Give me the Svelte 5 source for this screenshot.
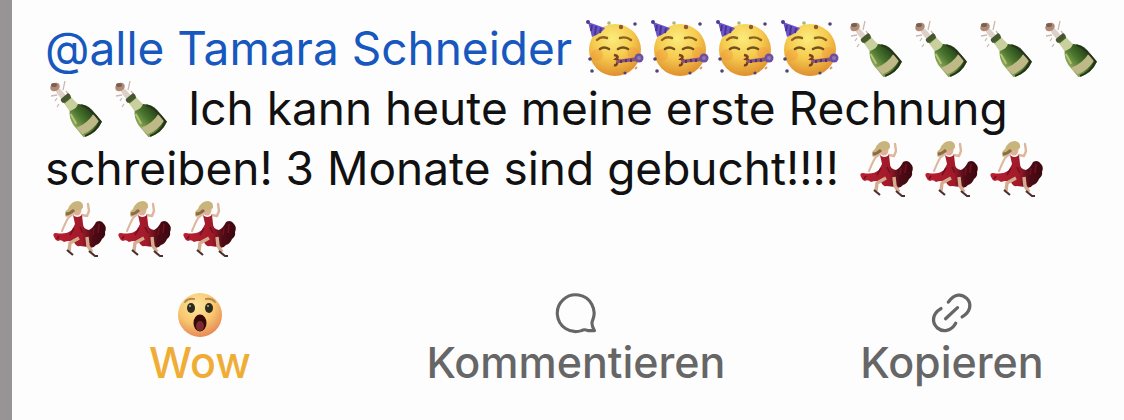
<script>
    let mention = "@alle Tamara Schneider";
    let bottles = 6;
    let faces = 4;
    let dancers = 6;
    let reacted = $state(true);
</script>

<svg class="defs" aria-hidden="true">
    <defs>
        <radialGradient id="face" cx="45%" cy="28%" r="75%">
            <stop offset="0" stop-color="#fbec7c" />
            <stop offset="0.5" stop-color="#f6cb4f" />
            <stop offset="1" stop-color="#dd8a2b" />
        </radialGradient>
        <radialGradient id="surprise" cx="42%" cy="28%" r="75%">
            <stop offset="0" stop-color="#fde6a0" />
            <stop offset="0.55" stop-color="#f8c76e" />
            <stop offset="1" stop-color="#e58455" />
        </radialGradient>
        <linearGradient id="skirt" x1="0" x2="1">
            <stop offset="0" stop-color="#bb1f30" />
            <stop offset="0.55" stop-color="#a01a2a" />
            <stop offset="0.75" stop-color="#4d0c16" />
            <stop offset="1" stop-color="#3c0710" />
        </linearGradient>
        <linearGradient id="glass" x1="0" x2="1">
            <stop offset="0" stop-color="#8fa85c" />
            <stop offset="0.45" stop-color="#4a752d" />
            <stop offset="1" stop-color="#223e17" />
        </linearGradient>
        <symbol id="party" viewBox="3 1 65 60">
            <circle cx="33" cy="33" r="26" fill="url(#face)" />
            <circle cx="15" cy="38" r="6" fill="#f0933a" opacity="0.35" />
            <circle cx="51" cy="36" r="6" fill="#f0933a" opacity="0.35" />
            <path d="M6 5 L23 11 Q20 16 10 20 Z" fill="#6d54c4" />
            <path d="M10 8 L9 14 M14 9 L13 18 M19 11 L18 16" stroke="#473394" stroke-width="2" />
            <circle cx="6" cy="5" r="2" fill="#4b3b91" />
            <path d="M15 23 Q19 19 25 21 M38 21 Q44 19 49 23" fill="none" stroke="#8b6220" stroke-width="2.4" stroke-linecap="round" />
            <path d="M18 32 Q22 29 27 32 M36 32 Q41 29 46 32" fill="none" stroke="#70501f" stroke-width="2.6" stroke-linecap="round" />
            <path d="M32 38 Q38 39 34 42 Q39 43 35 46 Q35 49 32 48" fill="none" stroke="#78401d" stroke-width="2.4" />
            <path d="M34 43 L56 40 L56 44 L35 46 Z" fill="#8d5078" />
            <path d="M39 43 L39 46 M44 42 L44 45 M49 42 L49 45" stroke="#4d3477" stroke-width="2" />
            <circle cx="57" cy="41" r="4.5" fill="#6a50a0" />
            <circle cx="57" cy="41" r="2" fill="#9673b4" />
            <g fill="#4c4671">
                <circle cx="53" cy="7" r="1.8" />
                <circle cx="8" cy="42" r="1.8" />
                <circle cx="10" cy="54" r="1.8" />
                <circle cx="43" cy="56" r="1.6" />
            </g>
            <circle cx="39" cy="10" r="2.2" fill="#8d5a2e" />
            <circle cx="27" cy="6" r="1.8" fill="#a9b876" />
            <path d="M53 52 L55 50" stroke="#dc9a70" stroke-width="2" />
        </symbol>
        <symbol id="bottle" viewBox="1 1 65 60">
            <path d="M19 13 L21 4 M13 18 L7 19 M13 21 L11 24 M22 14 L25 18 M15 27 L13 30" stroke="#cdb9b0" stroke-width="1.3" />
            <path d="M10 10 Q14 9 19 15 L24 21 L20 24 Q13 19 10 10" fill="#ddd0c8" />
            <ellipse cx="11" cy="10" rx="5" ry="4" transform="rotate(-30 11 10)" fill="#b08a74" />
            <ellipse cx="10" cy="8" rx="3" ry="2" fill="#7a5f52" />
            <g transform="translate(21 21) rotate(-40)">
                <path d="M-4 0 Q0 -2 5 0 L5 12 Q13 18 13 27 L13 42 Q1 48 -11 42 L-11 26 Q-10 18 -4 12 Z" fill="url(#glass)" />
                <path d="M-4 4 L5 4 L6 13 Q2 16 -5 13 Z" fill="#c9d09d" />
                <path d="M-11 30 Q1 34 13 30 L12 39 Q1 43 -10 39 Z" fill="#bfb988" />
                <path d="M-6 16 L-8 27" stroke="#b3c775" stroke-width="2" />
                <path d="M8 16 Q13 23 12 41 Q2 46 -9 42" fill="none" stroke="#263519" stroke-width="2" />
                <rect x="-5" y="-2" width="11" height="5" rx="2" fill="#46572f" />
            </g>
        </symbol>
        <symbol id="dancer" viewBox="-1 -1 65 60">
            <path d="M27 15 L22 19 L19 25 L16 32" fill="none" stroke="#dcb79d" stroke-width="2" stroke-linecap="round" />
            <path d="M36 16 L41 17 L43 12 L42 5" fill="none" stroke="#dcb79d" stroke-width="2.4" stroke-linecap="round" stroke-linejoin="round" />
            <path d="M27 16 Q31 20 36 16 L37 25 Q37 30 43 31 Q48 28 50 23 Q55 20 58 25 Q61 28 59 33 Q60 37 56 40 Q54 45 50 46 Q47 50 42 48 L34 47 Q30 48 28 43 Q23 41 18 43 Q15 40 12 42 Q9 41 8 38 Q6 34 10 34 Q20 36 26 31 L29 25 Z" fill="url(#skirt)" />
            <path d="M24 36 L28 29 M37 34 L34 28 M48 29 L47 36 M53 25 L52 34 M13 37 L11 40" stroke="#76101e" stroke-width="1.6" />
            <path d="M33 39 L24 44 L23 52" fill="none" stroke="#d6ac91" stroke-width="3.4" stroke-linejoin="round" />
            <path d="M41 38 L42 47 L46 53" fill="none" stroke="#d6ac91" stroke-width="3.4" stroke-linejoin="round" />
            <ellipse cx="31" cy="11" rx="4.5" ry="5.5" fill="#ddb193" />
            <path d="M37 9 Q34 12 29 11 Q25 17 20 18 Q17 13 22 10 Q25 2 32 2 Q38 3 37 9" fill="#c9b57c" />
            <path d="M20 15 Q24 15 28 11" stroke="#8a6c48" stroke-width="3" fill="none" />
            <path d="M21 51 L27 56 M43 52 L49 57 L52 57" stroke="#4b302e" stroke-width="2.2" fill="none" />
        </symbol>
    </defs>
</svg>

{#snippet emoji(name, label)}<svg class="emoji" role="img" aria-label={label}><use href="#{name}" /></svg>{/snippet}

<article class="post">
    <p class="message">
        <a href="#profile">{mention}</a>
        {#each Array(faces) as _}{@render emoji("party", "Partygesicht")}{/each}{#each Array(bottles) as _}{@render emoji("bottle", "Sektflasche")}{/each}
        Ich kann heute meine erste Rechnung schreiben! 3 Monate sind gebucht!!!!
        {#each Array(dancers) as _}{@render emoji("dancer", "Tänzerin")}{/each}
    </p>

    <div class="actions">
        <button class:reacted aria-pressed={reacted} onclick={() => reacted = !reacted}>
            <svg viewBox="0 0 46 46" aria-hidden="true">
                <circle cx="23" cy="23" r="22" fill="url(#surprise)" />
                <path d="M8 10 Q11 6 17 7 M29 7 Q35 6 38 10" fill="none" stroke="#b98a50" stroke-width="2" stroke-linecap="round" />
                <ellipse cx="14" cy="16" rx="4" ry="5" fill="#2b2c1d" />
                <ellipse cx="32" cy="16" rx="4" ry="5" fill="#2b2c1d" />
                <circle cx="13" cy="14" r="1" fill="#b5ad87" />
                <circle cx="31" cy="14" r="1" fill="#b5ad87" />
                <ellipse cx="23" cy="31" rx="6.5" ry="8.5" fill="#35080b" />
                <ellipse cx="23" cy="34" rx="4" ry="5" fill="#7a2a2e" />
            </svg>
            <span>Wow</span>
        </button>
        <button>
            <svg viewBox="-2 0 50 50" aria-hidden="true">
                <path d="M43 42 H36 Q32 40 29 42 A20 20 0 1 1 41 31 Q39 35 43 42 Z" fill="none" stroke="currentColor" stroke-width="3.4" stroke-linejoin="round" />
            </svg>
            <span>Kommentieren</span>
        </button>
        <button>
            <svg viewBox="-2 0 50 50" fill="none" stroke="currentColor" stroke-width="3.6" stroke-linecap="round" aria-hidden="true">
                <path d="M19 11 C26 1 34 2 39 7 C45 13 43 22 34 27" />
                <path d="M11 18 C1 24 1 33 7 39 C13 44 22 43 27 34" />
                <path d="M16 29 L29 17" />
            </svg>
            <span>Kopieren</span>
        </button>
    </div>
</article>

<style>
    :global(body) {
        margin: 0;
        background: #fefdfe;
    }

    .defs {
        position: absolute;
        width: 0;
        height: 0;
    }

    .post {
        box-sizing: border-box;
        min-height: 100vh;
        padding-top: 18px;
        border-left: 12px solid #989496;
        font-family: Inter, "Liberation Sans", sans-serif;
        color: #111;
    }

    .message {
        margin: 0;
        padding: 0 16px 0 33px;
        font-size: 46px;
        line-height: 60px;
    }

    .message a {
        color: #1658bd;
        text-decoration: none;
    }

    .emoji {
        display: inline-block;
        width: 65px;
        height: 60px;
        vertical-align: top;
    }

    .actions {
        display: flex;
        justify-content: space-between;
        margin-top: 34px;
        padding: 0 22px 0 38px;
    }

    button {
        display: flex;
        flex-direction: column;
        align-items: center;
        width: 300px;
        padding: 0;
        border: 0;
        background: none;
        color: #666;
        font-family: inherit;
        font-size: 43px;
        font-weight: 500;
        line-height: 48px;
        cursor: pointer;
    }

    button svg {
        width: 46px;
        height: 46px;
    }

    .reacted {
        color: #efad36;
    }
</style>
